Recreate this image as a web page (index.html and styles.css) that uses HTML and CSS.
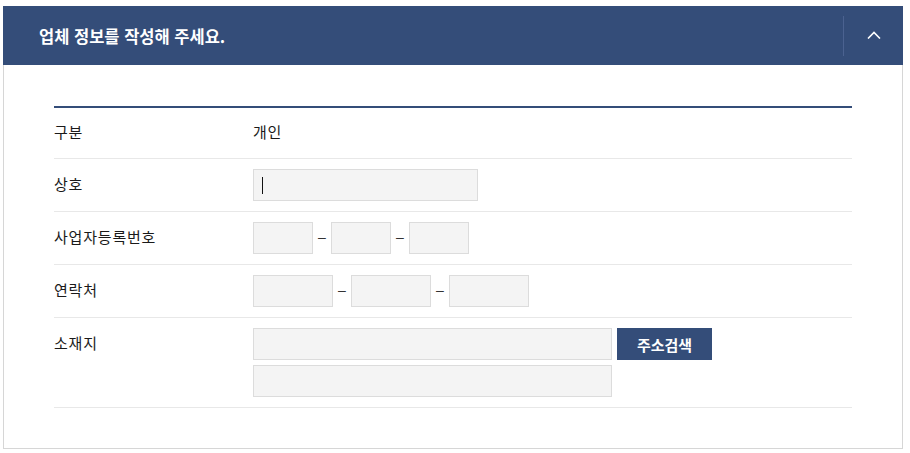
FILE: index.html
```html
<!DOCTYPE html>
<html lang="ko">
<head>
<meta charset="utf-8">
<link rel="stylesheet" href="styles.css">
</head>
<body>
<div class="panel">
  <div class="panel-head">
    <h2 class="panel-title">업체 정보를 작성해 주세요.</h2>
    <button class="toggle" type="button" aria-label="접기">
      <svg width="14" height="8" viewBox="0 0 14 8"><path d="M1 7.5 L7 1.5 L13 7.5" fill="none" stroke="#fff" stroke-width="1.6"/></svg>
    </button>
  </div>
  <div class="panel-body">
    <div class="form">
      <div class="row">
        <div class="label">구분</div>
        <div class="field text">개인</div>
      </div>
      <div class="row">
        <div class="label">상호</div>
        <div class="field">
          <span class="focus"><input class="inp w225" type="text"></span>
        </div>
      </div>
      <div class="row">
        <div class="label">사업자등록번호</div>
        <div class="field">
          <input class="inp w60" type="text"><span class="dash">–</span><input class="inp w60" type="text"><span class="dash">–</span><input class="inp w60" type="text">
        </div>
      </div>
      <div class="row">
        <div class="label">연락처</div>
        <div class="field">
          <input class="inp w80" type="text"><span class="dash">–</span><input class="inp w80" type="text"><span class="dash">–</span><input class="inp w80" type="text">
        </div>
      </div>
      <div class="row">
        <div class="label">소재지</div>
        <div class="field stack">
          <div class="line">
            <input class="inp w359" type="text"><button class="btn" type="button">주소검색</button>
          </div>
          <div class="line">
            <input class="inp w359" type="text">
          </div>
        </div>
      </div>
    </div>
  </div>
</div>
</body>
</html>
```
FILE: styles.css
```css
* { box-sizing: border-box; }
html, body { margin: 0; padding: 0; background: #fff; }
body {
  font-family: "Noto Sans CJK KR", "Noto Sans", sans-serif;
  color: #222;
}
.panel {
  width: 900px;
  margin: 6px 0 0 3px;
}
.panel-head {
  height: 59px;
  background: #344d79;
  display: flex;
  align-items: center;
  justify-content: space-between;
  padding-left: 36px;
}
.panel-title {
  margin: 0;
  font-size: 16.5px;
  font-weight: 700;
  color: #fff;
  line-height: 20px;
}
.toggle {
  width: 60px;
  height: 40px;
  border: 0;
  border-left: 1px solid #4b6290;
  background: transparent;
  padding: 0;
  display: flex;
  align-items: center;
  justify-content: center;
  cursor: pointer;
}
.toggle svg { display: block; margin-top: -1px; }
.panel-body {
  border: 1px solid #d6d6d6;
  border-top: 0;
  padding: 41px 50px 40px;
}
.form {
  border-top: 2px solid #344d79;
}
.row {
  display: flex;
  border-bottom: 1px solid #e8e8e8;
  padding: 10px 0;
  min-height: 53px;
}
.row:first-child { min-height: 51px; padding: 9px 0; }
.label {
  width: 199px;
  flex: none;
  font-size: 15px;
  letter-spacing: 0.8px;
  line-height: 30px;
  color: #1a1a1a;
}
.field {
  display: flex;
  align-items: center;
}
.field.text {
  font-size: 15px;
  letter-spacing: 0.8px;
  line-height: 30px;
  align-items: flex-start;
  color: #1a1a1a;
}
.field.stack {
  flex-direction: column;
  align-items: flex-start;
  gap: 5px;
}
.line { display: flex; gap: 5px; }
.inp {
  height: 32px;
  border: 1px solid #dcdcdc;
  background: #f4f4f4;
  padding: 0 8px;
  margin: 0;
  font: inherit;
  font-size: 14px;
  outline: none;
}
.w225 { width: 225px; }
.w60 { width: 60px; }
.w80 { width: 80px; }
.w359 { width: 359px; }
.dash {
  width: 18px;
  text-align: center;
  font-size: 14px;
  line-height: 14px;
  margin-top: -2px;
  color: #333;
  font-family: "Liberation Sans", sans-serif;
}
.focus {
  position: relative;
  display: block;
}
.focus::after {
  content: "";
  position: absolute;
  left: 9px;
  top: 8px;
  width: 1px;
  height: 17px;
  background: #111;
}
.btn {
  width: 95px;
  height: 32px;
  border: 0;
  background: #344d79;
  color: #fff;
  font-family: inherit;
  font-size: 15px;
  font-weight: 700;
  padding: 0;
  cursor: pointer;
}
```
